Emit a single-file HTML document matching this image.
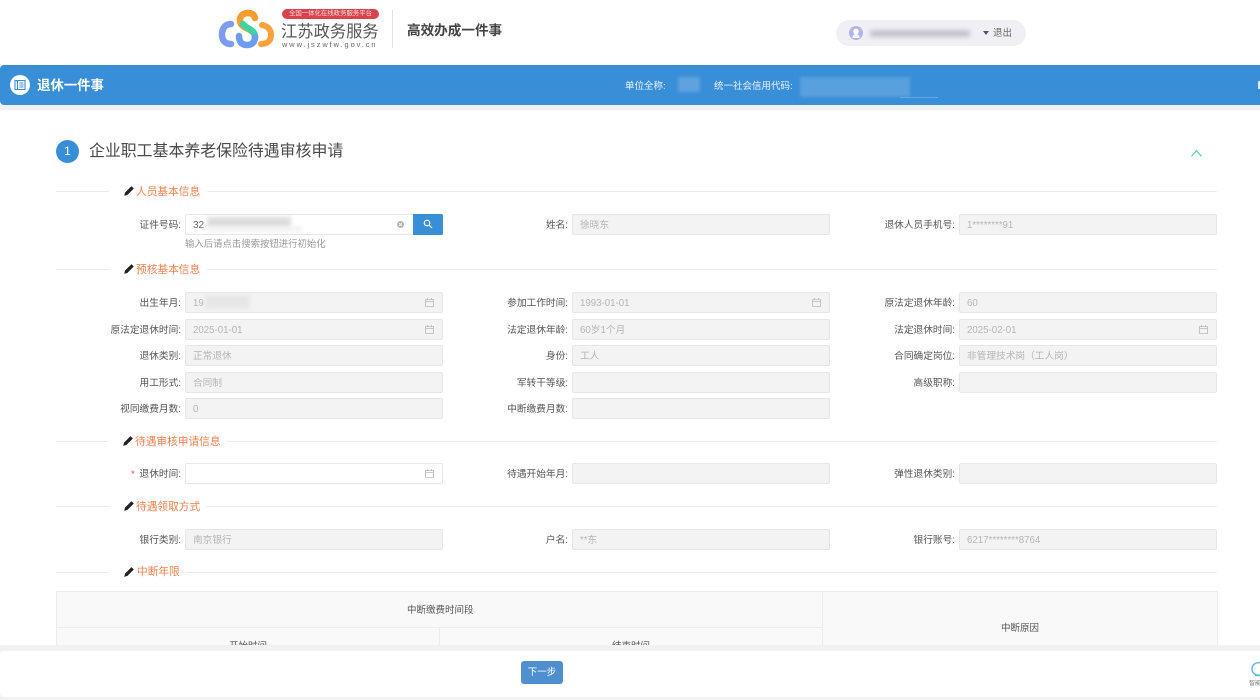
<!DOCTYPE html>
<html lang="zh"><head><meta charset="utf-8"><title>退休一件事</title>
<style>
*{box-sizing:border-box}
html,body{margin:0;padding:0;width:1260px;height:700px;overflow:hidden;background:#fff;font-family:"Liberation Sans","Noto Sans CJK SC",sans-serif;color:#555}
.a{position:absolute;white-space:nowrap}
.l{position:absolute;width:130px;text-align:right;font-size:9.7px;line-height:23px;height:21px;color:#555;white-space:nowrap}
.f{position:absolute;width:258px;height:21px;background:#f3f3f3;border:1px solid #e6e6e6;border-radius:2px;font-size:9.7px;line-height:21px;padding-left:7px;color:#b5b5b5;white-space:nowrap}
.f.w{background:#fff}
.c{position:absolute;right:8px;top:5px}
.s{position:absolute;height:1px;background:#ebebeb}
.t{position:absolute;font-size:10.7px;line-height:14px;color:#f0814f;white-space:nowrap}
.b{position:absolute;background:#d4d4d4;filter:blur(2px)}
</style></head><body>
<svg width="0" height="0" style="position:absolute"><defs>
<symbol id="cal" viewBox="0 0 9 9"><path d="M.5 1.5h8v7h-8zM.5 3.500h8M2.500 0v2M6.500 0v2" fill="none" stroke="#b9b9b9" stroke-width=".8"/></symbol>
<symbol id="pen" viewBox="0 0 11 11"><path d="M8.200.2l2.600 2.600-7 7-3.600 1 1-3.600z" fill="#222"/></symbol>
</defs></svg>

<!-- header -->
<svg class="a" style="left:218px;top:9px" width="57" height="40" viewBox="0 0 57 40">
<path d="M13 15C6 15 4 21 4 26s3 9 9 9" fill="none" stroke="#7e9bf0" stroke-width="6.500" stroke-linecap="round"/>
<path d="M44 16c6 1 9 5 9 10 0 6-4 9-10 9" fill="none" stroke="#f9a13a" stroke-width="6" stroke-linecap="round"/>
<path d="M37 9C36 5 33 4 30 4c-5 0-8 3-8 7 0 5 4 7 8 9 4 2 7 4 7 8" fill="none" stroke="#f79c2e" stroke-width="6.500" stroke-linecap="round"/>
<path d="M25 15c2 3 5 4 8 6 3 2 4 4 4 7" fill="none" stroke="#3ed3a3" stroke-width="6.500" stroke-linecap="round"/>
<path d="M37 28c0 5-3 8-8 8s-8-3-8-9" fill="none" stroke="#6b9cf0" stroke-width="6.500" stroke-linecap="round"/>
</svg>
<div class="a" style="left:282px;top:9px;width:97px;height:10px;border-radius:5px;background:#d9434e;color:#fbdcdc;font-size:6.400px;line-height:10px;text-align:center">全国一体化在线政务服务平台</div>
<div class="a" style="left:281px;top:22px;font-size:16.300px;line-height:21px;color:#555">江苏政务服务</div>
<div class="a" style="left:282px;top:40px;font-size:7.400px;line-height:9px;letter-spacing:1.950px;color:#666">www.jszwfw.gov.cn</div>
<div class="a" style="left:392px;top:10px;width:1px;height:38px;background:#e2e2e2"></div>
<div class="a" style="left:407px;top:21px;font-size:13.600px;line-height:20px;font-weight:bold;color:#444">高效办成一件事</div>

<div class="a" style="left:836px;top:20px;width:190px;height:26px;border-radius:13px;background:#f0f0f4"></div>
<svg class="a" style="left:849px;top:26px" width="14" height="14" viewBox="0 0 14 14"><circle cx="7" cy="7" r="7" fill="#b3b3ee"/><circle cx="7" cy="5.600" r="2.800" fill="#fff"/><path d="M3.200 12c.6-3 2-3.600 3.800-3.600s3.200.6 3.800 3.600z" fill="#fff"/></svg>
<div class="b" style="left:870px;top:30px;width:100px;height:7px;background:#c4c4c8"></div>
<div class="a" style="left:983px;top:31px;width:0;height:0;border:3px solid transparent;border-top:4px solid #555;border-bottom:0"></div>
<div class="a" style="left:993px;top:27px;font-size:9.500px;line-height:14px;color:#666">退出</div>

<!-- blue bar -->
<div class="a" style="left:0;top:65px;width:1260px;height:40px;background:#398ed8;border-radius:4px 0 0 4px"></div>
<div class="a" style="left:0;top:105px;width:1260px;height:5px;background:#f1f1f1"></div>
<svg class="a" style="left:10px;top:75px" width="20" height="20" viewBox="0 0 20 20"><circle cx="10" cy="10" r="10" fill="#fff"/><path d="M5 5.500h10v9H5zM7.500 5.500v9M9.500 8h4M9.500 10h4M9.500 12h4" fill="none" stroke="#398ed8" stroke-width="1.100"/></svg>
<div class="a" style="left:37px;top:76px;font-size:13.400px;line-height:19px;font-weight:bold;color:#fff">退休一件事</div>
<div class="a" style="left:625px;top:80px;font-size:9.500px;line-height:13px;color:#eaf3fb">单位全称:</div>
<div class="a" style="left:678px;top:77px;width:22px;height:15px;background:#5fa2e0;filter:blur(1.500px)"></div>
<div class="a" style="left:714px;top:80px;font-size:9.500px;line-height:13px;color:#eaf3fb">统一社会信用代码:</div>
<div class="a" style="left:800px;top:77px;width:110px;height:20px;background:#58a0de;filter:blur(1.500px)"></div>
<div class="a" style="left:900px;top:97px;width:38px;height:1px;background:#62a6e2"></div>
<div class="a" style="left:1258px;top:81px;width:2px;height:8px;background:#dbeaf8"></div>

<!-- title -->
<div class="a" style="left:56px;top:140px;width:23px;height:23px;border-radius:50%;background:#398ed8;color:#fff;font-size:12px;line-height:23px;text-align:center">1</div>
<div class="a" style="left:89px;top:141px;font-size:15.900px;line-height:22px;color:#4a4a4a">企业职工基本养老保险待遇审核申请</div>
<svg class="a" style="left:1190px;top:148px" width="13" height="10" viewBox="0 0 13 10"><path d="M1.500 8.500L6.500 2.500l5 6" fill="none" stroke="#5ccda8" stroke-width="1.100"/></svg>

<!-- section 1 -->
<div class="s" style="left:56px;top:191px;width:53px"></div><div class="s" style="left:207px;top:191px;width:1010px"></div>
<svg class="a" style="left:124px;top:186px" width="10" height="10"><use href="#pen"/></svg>
<div class="t" style="left:136px;top:185px">人员基本信息</div>
<div class="l" style="left:51px;top:214px">证件号码:</div>
<div class="f w" style="left:185px;top:214px;color:#666;font-size:10px">32</div>
<div class="b" style="left:207px;top:217px;width:84px;height:10px;background:#dcdcdc"></div>
<div class="b" style="left:208px;top:227px;width:95px;height:4px;background:#f0f0f0"></div>
<div class="a" style="left:397px;top:221px;width:7px;height:7px;border-radius:50%;background:#b5b5b5"></div>
<svg class="a" style="left:397px;top:221px" width="7" height="7" viewBox="0 0 7 7"><path d="M2.200 2.200l2.600 2.600M4.800 2.200L2.200 4.800" stroke="#fff" stroke-width=".8"/></svg>
<div class="a" style="left:413px;top:214px;width:30px;height:21px;background:#398ed8;border-radius:0 2px 2px 0"></div>
<svg class="a" style="left:423px;top:219px" width="10" height="10" viewBox="0 0 10 10"><circle cx="4" cy="4" r="2.800" fill="none" stroke="#fff" stroke-width="1.100"/><path d="M6 6l3 3" stroke="#fff" stroke-width="1.200"/></svg>
<div class="a" style="left:185px;top:237px;font-size:9.400px;line-height:13px;color:#999">输入后请点击搜索按钮进行初始化</div>
<div class="l" style="left:438px;top:214px">姓名:</div>
<div class="f" style="left:572px;top:214px">徐晓东</div>
<div class="l" style="left:825px;top:214px">退休人员手机号:</div>
<div class="f" style="left:959px;top:214px">1********91</div>

<!-- section 2 -->
<div class="s" style="left:56px;top:269px;width:53px"></div><div class="s" style="left:207px;top:269px;width:1010px"></div>
<svg class="a" style="left:124px;top:264px" width="10" height="10"><use href="#pen"/></svg>
<div class="t" style="left:136px;top:263px">预核基本信息</div>

<div class="l" style="left:51px;top:292px">出生年月:</div>
<div class="f" style="left:185px;top:292px">19<svg class="c" width="9" height="9"><use href="#cal"/></svg></div>
<div class="b" style="left:205px;top:295px;width:45px;height:14px;background:#e6e6e6"></div>
<div class="l" style="left:438px;top:292px">参加工作时间:</div>
<div class="f" style="left:572px;top:292px">1993-01-01<svg class="c" width="9" height="9"><use href="#cal"/></svg></div>
<div class="l" style="left:825px;top:292px">原法定退休年龄:</div>
<div class="f" style="left:959px;top:292px">60</div>

<div class="l" style="left:51px;top:319px">原法定退休时间:</div>
<div class="f" style="left:185px;top:319px">2025-01-01<svg class="c" width="9" height="9"><use href="#cal"/></svg></div>
<div class="l" style="left:438px;top:319px">法定退休年龄:</div>
<div class="f" style="left:572px;top:319px">60岁1个月</div>
<div class="l" style="left:825px;top:319px">法定退休时间:</div>
<div class="f" style="left:959px;top:319px">2025-02-01<svg class="c" width="9" height="9"><use href="#cal"/></svg></div>

<div class="l" style="left:51px;top:345px">退休类别:</div>
<div class="f" style="left:185px;top:345px">正常退休</div>
<div class="l" style="left:438px;top:345px">身份:</div>
<div class="f" style="left:572px;top:345px">工人</div>
<div class="l" style="left:825px;top:345px">合同确定岗位:</div>
<div class="f" style="left:959px;top:345px">非管理技术岗（工人岗）</div>

<div class="l" style="left:51px;top:372px">用工形式:</div>
<div class="f" style="left:185px;top:372px">合同制</div>
<div class="l" style="left:438px;top:372px">军转干等级:</div>
<div class="f" style="left:572px;top:372px"></div>
<div class="l" style="left:825px;top:372px">高级职称:</div>
<div class="f" style="left:959px;top:372px"></div>

<div class="l" style="left:51px;top:398px">视同缴费月数:</div>
<div class="f" style="left:185px;top:398px">0</div>
<div class="l" style="left:438px;top:398px">中断缴费月数:</div>
<div class="f" style="left:572px;top:398px"></div>

<!-- section 3 -->
<div class="s" style="left:56px;top:441px;width:52px"></div><div class="s" style="left:227px;top:441px;width:990px"></div>
<svg class="a" style="left:123px;top:436px" width="10" height="10"><use href="#pen"/></svg>
<div class="t" style="left:135px;top:435px">待遇审核申请信息</div>
<div class="a" style="left:131px;top:468px;font-size:9.500px;line-height:14px;color:#e8434f">*</div>
<div class="l" style="left:51px;top:463px">退休时间:</div>
<div class="f w" style="left:185px;top:463px"><svg class="c" width="9" height="9"><use href="#cal"/></svg></div>
<div class="l" style="left:438px;top:463px">待遇开始年月:</div>
<div class="f" style="left:572px;top:463px"></div>
<div class="l" style="left:825px;top:463px">弹性退休类别:</div>
<div class="f" style="left:959px;top:463px"></div>

<!-- section 4 -->
<div class="s" style="left:56px;top:506px;width:53px"></div><div class="s" style="left:206px;top:506px;width:1011px"></div>
<svg class="a" style="left:124px;top:501px" width="10" height="10"><use href="#pen"/></svg>
<div class="t" style="left:136px;top:500px">待遇领取方式</div>
<div class="l" style="left:51px;top:529px">银行类别:</div>
<div class="f" style="left:185px;top:529px">南京银行</div>
<div class="l" style="left:438px;top:529px">户名:</div>
<div class="f" style="left:572px;top:529px">**东</div>
<div class="l" style="left:825px;top:529px">银行账号:</div>
<div class="f" style="left:959px;top:529px">6217********8764</div>

<!-- section 5 -->
<div class="s" style="left:56px;top:572px;width:53px"></div><div class="s" style="left:186px;top:572px;width:1031px"></div>
<svg class="a" style="left:124px;top:567px" width="10" height="10"><use href="#pen"/></svg>
<div class="t" style="left:137px;top:565px">中断年限</div>

<!-- table -->
<div class="a" style="left:56px;top:591px;width:1162px;height:60px;background:#f9f9f9;border:1px solid #ececec"></div>
<div class="a" style="left:56px;top:627px;width:767px;height:1px;background:#ececec"></div>
<div class="a" style="left:822px;top:591px;width:1px;height:60px;background:#ececec"></div>
<div class="a" style="left:439px;top:627px;width:1px;height:24px;background:#ececec"></div>
<div class="a" style="left:407px;top:604px;font-size:9.500px;line-height:14px;color:#555">中断缴费时间段</div>
<div class="a" style="left:229px;top:640px;font-size:9.500px;line-height:14px;color:#555">开始时间</div>
<div class="a" style="left:612px;top:640px;font-size:9.500px;line-height:14px;color:#555">结束时间</div>
<div class="a" style="left:1001px;top:622px;font-size:9.500px;line-height:14px;color:#555">中断原因</div>

<!-- footer -->
<div class="a" style="left:0;top:645px;width:1260px;height:55px;background:#f1f1f1"></div>
<div class="a" style="left:0;top:651px;width:1260px;height:46px;background:#fff;border-radius:4px 0 0 4px"></div>
<div class="a" style="left:521px;top:661px;width:42px;height:23px;background:#4f8fd0;border-radius:3px;color:#fff;font-size:9.500px;line-height:23px;text-align:center">下一步</div>
<svg class="a" style="left:1250px;top:661px" width="10" height="18" viewBox="0 0 10 18"><path d="M10 1.500C5 1.500 2 4 2 8s3 6 8 6.500" fill="none" stroke="#6db5e8" stroke-width="1.500"/><path d="M5 14.500h5" stroke="#45d0b0" stroke-width="1.500"/></svg>
<div class="a" style="left:1249px;top:680px;width:11px;overflow:hidden;font-size:6px;line-height:8px;color:#777">智能客服</div>
</body></html>
